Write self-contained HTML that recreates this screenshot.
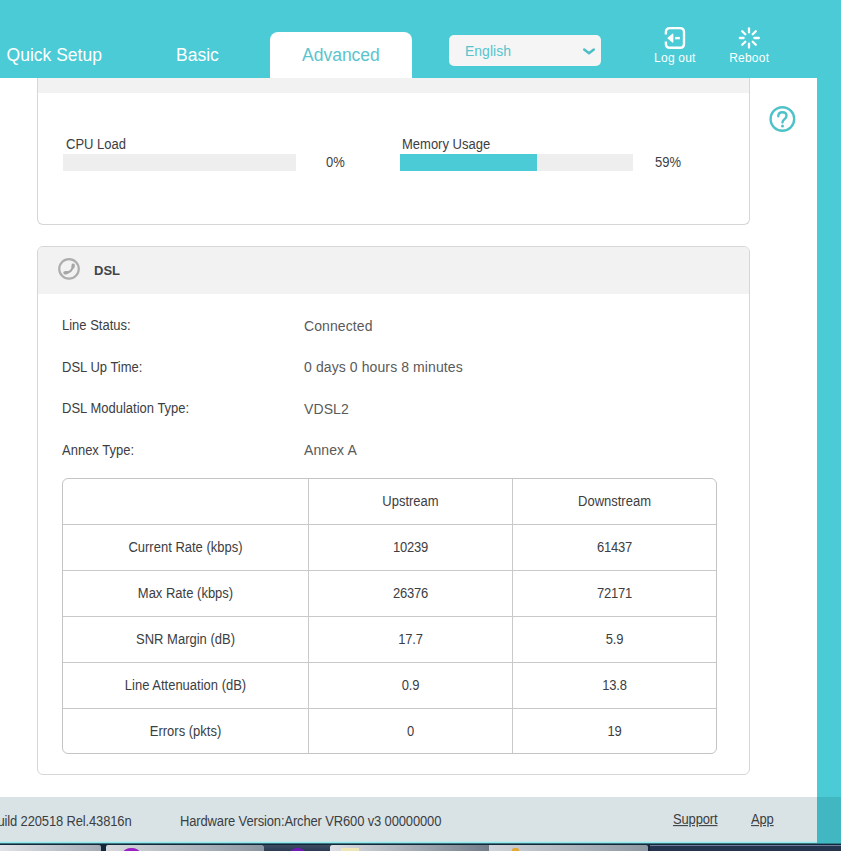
<!DOCTYPE html>
<html>
<head>
<meta charset="utf-8">
<title>Archer VR600</title>
<style>
html,body{margin:0;padding:0;}
body{width:841px;height:851px;overflow:hidden;position:relative;background:#4acbd6;font-family:"Liberation Sans",sans-serif;color:#3c3e43;}
.abs{position:absolute;}
.t{position:absolute;white-space:nowrap;line-height:1;}
#content{left:0;top:78px;width:817px;height:766px;background:#fff;}
#header{left:0;top:0;width:841px;height:78px;background:#4acbd6;}
.nav{font-size:17.5px;color:#fff;}
#tab{left:270px;top:32px;width:142px;height:46px;background:#fff;border-radius:8px 8px 0 0;}
#lang{left:449px;top:35px;width:152px;height:31px;background:#f5f5f5;border-radius:5px;}
.panel{border:1px solid #d6d6d6;box-sizing:border-box;background:#fff;}
#p1{left:37px;top:78px;width:713px;height:147px;border-radius:0 0 6px 6px;border-top:none;}
#p1h{left:38px;top:78px;width:711px;height:15px;background:#f2f2f2;}
#p2{left:37px;top:246px;width:713px;height:529px;border-radius:6px;}
#p2h{left:38px;top:247px;width:711px;height:47px;background:#f2f2f2;border-radius:5px 5px 0 0;}
.bar{height:17px;width:233px;background:#eeeeee;top:154px;}
.lbl{font-size:13px;color:#3c3e43;transform:scaleY(1.075);transform-origin:0 11px;}
.val{font-size:14px;color:#5a5a5a;letter-spacing:0.1px;}
#tbl{left:62px;top:478px;width:655px;height:276px;border:1px solid #c4c4c4;border-radius:6px;box-sizing:border-box;}
.hl{left:63px;width:653px;height:1px;background:#c9c9c9;}
.vl{top:479px;height:274px;width:1px;background:#c9c9c9;}
.c{position:absolute;text-align:center;font-size:13px;line-height:1;white-space:nowrap;color:#3c3e43;transform:scaleY(1.075);transform-origin:0 11px;}
.c1{left:63px;width:245px;}
.c2{left:309px;width:203px;}
.n{letter-spacing:-0.25px;}
.c3{left:513px;width:203px;}
#footer{left:0;top:797px;width:841px;height:46px;background:rgba(24,82,96,0.165);}
.ft{font-size:13px;color:#3c3e43;letter-spacing:-0.15px;transform:scaleY(1.075);transform-origin:0 11px;}
</style>
</head>
<body>
<div id="header" class="abs"></div>
<div id="content" class="abs"></div>

<!-- nav -->
<div id="tab" class="abs"></div>
<div class="t nav" style="left:6.6px;top:47px;">Quick Setup</div>
<div class="t nav" style="left:176px;top:47px;">Basic</div>
<div class="t nav" style="left:302px;top:47px;color:#5cc4cd;">Advanced</div>

<!-- language select -->
<div id="lang" class="abs"></div>
<div class="t" style="left:465px;top:44px;font-size:14px;color:#56c3cd;">English</div>
<svg class="abs" style="left:581px;top:45px;" width="16" height="12" viewBox="0 0 16 12"><path d="M3.2 4.6 L8 8.3 L12.8 4.6" fill="none" stroke="#4dbfc8" stroke-width="2.5" stroke-linecap="round" stroke-linejoin="round"/></svg>

<!-- log out -->
<svg class="abs" style="left:663px;top:26px;" width="24" height="24" viewBox="0 0 24 24">
<path d="M2.9 8.4 V6.1 Q2.9 2.1 6.9 2.1 H17 Q21 2.1 21 6.1 V17.8 Q21 21.8 17 21.8 H6.9 Q2.9 21.8 2.9 17.8 V15.6" fill="none" stroke="#fff" stroke-width="2.4"/>
<path d="M12 12.1 H16.8" fill="none" stroke="#fff" stroke-width="2.4"/>
<path d="M9.8 8.2 L4.9 12.1 L9.8 16 Z" fill="#fff" stroke="#fff" stroke-width="1.2" stroke-linejoin="round"/>
</svg>
<div class="t" style="left:654.1px;top:51.6px;font-size:12px;letter-spacing:0.22px;color:#fff;">Log out</div>

<!-- reboot -->
<svg class="abs" style="left:737px;top:25.6px;" width="24" height="24" viewBox="-12 -12 24 24">
<g stroke="#fff" stroke-width="2.3" stroke-linecap="round">
<line x1="0" y1="-5.6" x2="0" y2="-9.5"/>
<line x1="0" y1="5.6" x2="0" y2="9.5"/>
<line x1="-5.4" y1="0" x2="-9.2" y2="0"/>
<line x1="5.4" y1="0" x2="9.8" y2="0"/>
<line x1="3.7" y1="-3.7" x2="6.8" y2="-6.8"/>
<line x1="-3.7" y1="3.7" x2="-6.8" y2="6.8"/>
<line x1="-3.7" y1="-3.7" x2="-6.8" y2="-6.8"/>
<line x1="3.7" y1="3.7" x2="6.8" y2="6.8"/>
</g>
</svg>
<div class="t" style="left:729.2px;top:51.6px;font-size:12px;letter-spacing:0.22px;color:#fff;">Reboot</div>

<!-- help -->
<svg class="abs" style="left:768px;top:105px;" width="29" height="29" viewBox="0 0 29 29">
<circle cx="14.4" cy="14" r="11.8" fill="none" stroke="#4fc1c9" stroke-width="2.4"/>
<path d="M10.3 11.2 Q10.3 7.2 14.4 7.2 Q18.5 7.2 18.5 10.8 Q18.5 12.8 16.4 14.2 Q14.5 15.5 14.5 17.4" fill="none" stroke="#4fc1c9" stroke-width="2.4" stroke-linecap="round"/>
<circle cx="14.5" cy="21" r="1.5" fill="#4fc1c9"/>
</svg>

<!-- panel 1 -->
<div id="p1" class="abs panel"></div>
<div id="p1h" class="abs"></div>

<div class="t lbl" style="left:66px;top:138px;">CPU Load</div>
<div class="abs bar" style="left:63px;"></div>
<div class="t lbl" style="left:326px;top:156px;">0%</div>

<div class="t lbl" style="left:402px;top:138px;">Memory Usage</div>
<div class="abs bar" style="left:400px;"></div>
<div class="abs bar" style="left:400px;width:137px;background:#4acbd6;"></div>
<div class="t lbl" style="left:655px;top:156px;">59%</div>

<!-- panel 2 -->
<div id="p2" class="abs panel"></div>
<div id="p2h" class="abs"></div>
<svg class="abs" style="left:56px;top:256px;" width="26" height="26" viewBox="0 0 26 26">
<circle cx="13" cy="12.9" r="9.75" fill="none" stroke="#adadad" stroke-width="2.2"/>
<path d="M8.9 16.7 Q16.3 16.9 17.3 8.9" fill="none" stroke="#a6a6a6" stroke-width="2" stroke-linecap="round"/>
<path d="M8.9 16.8 L10.9 16.6" fill="none" stroke="#a6a6a6" stroke-width="3.2" stroke-linecap="round"/>
<path d="M17.2 9 L17 11" fill="none" stroke="#a6a6a6" stroke-width="3.2" stroke-linecap="round"/>
</svg>
<div class="t" style="left:94px;top:264px;font-size:13px;font-weight:bold;color:#42444a;">DSL</div>

<div class="t lbl" style="left:62px;top:319px;">Line Status:</div>
<div class="t val" style="left:304px;top:319px;">Connected</div>
<div class="t lbl" style="left:62px;top:361px;">DSL Up Time:</div>
<div class="t val" style="left:304px;top:360px;">0 days 0 hours 8 minutes</div>
<div class="t lbl" style="left:62px;top:402px;">DSL Modulation Type:</div>
<div class="t val" style="left:304px;top:402px;">VDSL2</div>
<div class="t lbl" style="left:62px;top:444px;">Annex Type:</div>
<div class="t val" style="left:304px;top:443px;">Annex A</div>

<!-- table -->
<div id="tbl" class="abs"></div>
<div class="abs hl" style="top:524px;"></div>
<div class="abs hl" style="top:570px;"></div>
<div class="abs hl" style="top:616px;"></div>
<div class="abs hl" style="top:662px;"></div>
<div class="abs hl" style="top:708px;"></div>
<div class="abs vl" style="left:308px;"></div>
<div class="abs vl" style="left:512px;"></div>

<div class="c c2" style="top:495px;">Upstream</div>
<div class="c c3" style="top:495px;">Downstream</div>

<div class="c c1" style="top:541px;">Current Rate (kbps)</div>
<div class="c c2 n" style="top:541px;">10239</div>
<div class="c c3 n" style="top:541px;">61437</div>

<div class="c c1" style="top:587px;">Max Rate (kbps)</div>
<div class="c c2 n" style="top:587px;">26376</div>
<div class="c c3 n" style="top:587px;">72171</div>

<div class="c c1" style="top:633px;">SNR Margin (dB)</div>
<div class="c c2 n" style="top:633px;">17.7</div>
<div class="c c3 n" style="top:633px;">5.9</div>

<div class="c c1" style="top:679px;">Line Attenuation (dB)</div>
<div class="c c2 n" style="top:679px;">0.9</div>
<div class="c c3 n" style="top:679px;">13.8</div>

<div class="c c1" style="top:725px;">Errors (pkts)</div>
<div class="c c2 n" style="top:725px;">0</div>
<div class="c c3 n" style="top:725px;">19</div>

<!-- footer -->
<div id="footer" class="abs"></div>
<div class="t ft" style="right:709.5px;top:814.5px;">Firmware Version:1.5.0 0.9.1 v006c.0 Build 220518 Rel.43816n</div>
<div class="t ft" style="left:180px;top:814.5px;">Hardware Version:Archer VR600 v3 00000000</div>
<div class="t ft" style="left:673px;top:813px;font-size:13px;text-decoration:underline;">Support</div>
<div class="t ft" style="left:751px;top:813px;font-size:13px;text-decoration:underline;">App</div>

<!-- taskbar -->
<div class="abs" style="left:0;top:841px;width:817px;height:1px;background:#c4e8ea;"></div>
<div class="abs" style="left:0;top:842px;width:817px;height:1px;background:#8ee9ec;"></div>
<div class="abs" style="left:0;top:843px;width:817px;height:1px;background:#42757f;"></div>
<div class="abs" style="left:817px;top:843px;width:24px;height:1px;background:#2d7f8c;"></div>
<div class="abs" style="left:0;top:844px;width:841px;height:7px;background:#12273a;"></div>
<div class="abs" style="left:650px;top:845px;width:191px;height:6px;background:#24344f;"></div>
<div class="abs" style="left:650px;top:845px;width:191px;height:1px;background:#6d7d9b;"></div>
<div class="abs" style="left:264px;top:845px;width:66px;height:6px;background:linear-gradient(180deg,#3b4c63,#2a3a52);"></div>
<div class="abs" style="left:0;top:845px;width:101px;height:6px;background:linear-gradient(90deg,#dfe3e7,#a3abb5);border-radius:0 2px 0 0;"></div>
<div class="abs" style="left:106px;top:845px;width:158px;height:6px;background:linear-gradient(90deg,#d6dade,#8b95a1);border-radius:2px 2px 0 0;"></div>
<div class="abs" style="left:330px;top:845px;width:159px;height:6px;background:linear-gradient(90deg,#dde0e4,#727d8a);border-radius:2px 0 0 0;"></div>
<div class="abs" style="left:489px;top:845px;width:159px;height:6px;background:linear-gradient(90deg,#cfd4d9,#8d97a2);border-radius:0 2px 0 0;"></div>
<div class="abs" style="left:123px;top:848px;width:17px;height:10px;background:#9a1fc4;border-radius:50%;"></div>
<div class="abs" style="left:289.5px;top:848px;width:15px;height:10px;background:#6f1ab5;border-radius:50%;"></div>
<div class="abs" style="left:341px;top:848px;width:18px;height:3px;background:#efe6b8;"></div>
<div class="abs" style="left:512px;top:848px;width:7px;height:3px;background:#e2a93a;border-radius:2px 2px 0 0;"></div>
</body>
</html>
